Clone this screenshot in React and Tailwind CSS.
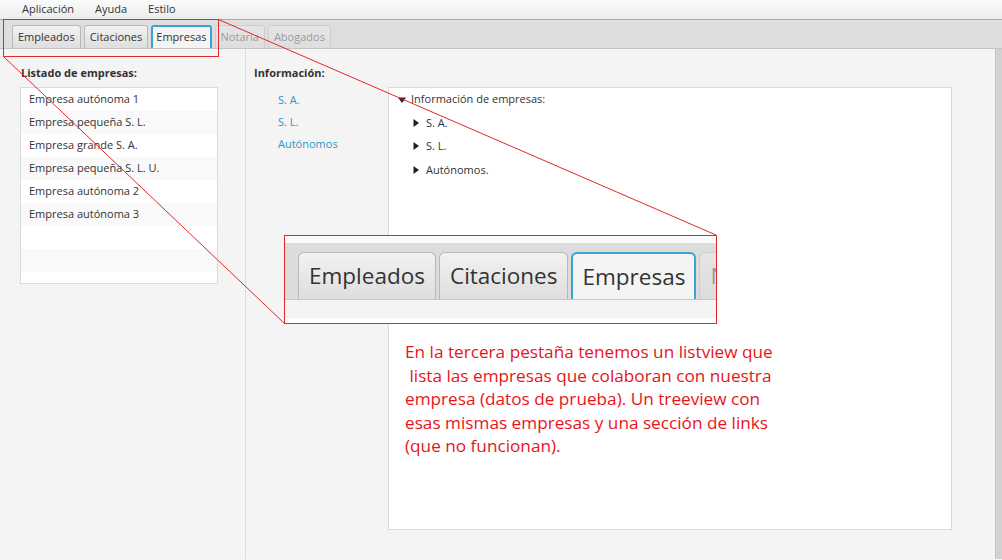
import React from "react";

const empresas = [
    "Empresa autónoma 1",
    "Empresa pequeña S. L.",
    "Empresa grande S. A.",
    "Empresa pequeña S. L. U.",
    "Empresa autónoma 2",
    "Empresa autónoma 3",
    "",
    "",
    "",
];

const tabs = [
    { label: "Empleados" },
    { label: "Citaciones" },
    { label: "Empresas", selected: true },
    { label: "Notaria", disabled: true },
    { label: "Abogados", disabled: true },
];

const Tab = ({ label, selected, disabled, big }) => {
    if (selected) {
        const sel = big
            ? "h-[47px] px-[9px] text-[22.5px] rounded-t-[6px]"
            : "h-[23px] px-[3px] text-[11px] rounded-t-[3px]";
        return (
            <div
                className={`${sel} shrink-0 flex items-center bg-[#f4f4f4] text-[#333] border-t-2 border-x-2 border-[#3fa3d2]`}
            >
                {label}
            </div>
        );
    }
    const base = big
        ? "h-[47px] px-[10px] text-[22.5px] rounded-t-[6px]"
        : "h-[23px] px-[5px] text-[11px] rounded-t-[3px]";
    return (
        <div
            className={`${base} shrink-0 flex items-center bg-gradient-to-b from-[#f2f2f2] to-[#dedede] text-[#333] border-t border-x border-[#b8b8b8] ${disabled ? "opacity-40" : ""}`}
        >
            {label}
        </div>
    );
};

const Arrow = ({ down }) => (
    <svg width="8" height="8" viewBox="0 0 8 8" className="shrink-0">
        {down ? <path d="M0 1.5 L8 1.5 L4 7 Z" fill="#222" /> : <path d="M1.5 0 L7 4 L1.5 8 Z" fill="#222" />}
    </svg>
);

export default function App() {
    return (
        <div className="relative w-[1002px] h-[560px] overflow-hidden bg-[#f4f4f4] text-[#333] font-['Open_Sans','Noto_Sans',sans-serif] text-[11px]">
            {/* menu */}
            <div className="h-[20px] flex items-center gap-[21px] pl-[22px] bg-gradient-to-b from-[#fbfbfb] to-[#ececec] border-b border-[#a9a9a9]">
                <span>Aplicación</span>
                <span>Ayuda</span>
                <span>Estilo</span>
            </div>

            {/* tab header */}
            <div className="h-[29px] flex items-end gap-[3px] pl-[12px] bg-[#dedede] border-b border-[#c4c4c4]">
                {tabs.map((t) => (
                    <Tab key={t.label} {...t} />
                ))}
            </div>

            {/* content */}
            <div className="flex h-[510px]">
                <div className="w-[246px] shrink-0 border-r border-[#dcdcdc] pl-[20px] pt-[16px]">
                    <div className="font-bold pl-[1px] leading-[16px]">Listado de empresas:</div>
                    <div className="mt-[6px] w-[198px] h-[197px] overflow-hidden bg-white border border-[#dadada]">
                        {empresas.map((e, i) => (
                            <div
                                key={i}
                                className={`h-[23px] flex items-center pl-[8px] ${i % 2 ? "bg-[#f9f9f9]" : "bg-white"}`}
                            >
                                {e}
                            </div>
                        ))}
                    </div>
                </div>

                <div className="flex-1 pl-[8px] pt-[16px]">
                    <div className="font-bold leading-[16px]">Información:</div>
                    <div className="flex mt-[6px]">
                        <div className="w-[134px] shrink-0 pl-[24px] pt-[2px] flex flex-col text-[#2a98c6]">
                            <span className="h-[22px] leading-[22px]">S. A.</span>
                            <span className="h-[22px] leading-[22px]">S. L.</span>
                            <span className="h-[22px] leading-[22px]">Autónomos</span>
                        </div>
                        <div className="w-[564px] h-[443px] bg-white border border-[#dadada]">
                            <div className="h-[23px] flex items-center gap-[5px] pl-[9px]">
                                <Arrow down />
                                <span>Información de empresas:</span>
                            </div>
                            {["S. A.", "S. L.", "Autónomos."].map((n) => (
                                <div key={n} className="h-[23.5px] flex items-center gap-[6px] pl-[23px]">
                                    <Arrow />
                                    <span>{n}</span>
                                </div>
                            ))}
                        </div>
                    </div>
                </div>

                <div className="w-[7px] shrink-0 bg-[#d2d2d2] border-l border-[#c6c6c6]" />
            </div>

            {/* zoomed inset */}
            <div className="absolute left-[284px] top-[235px] w-[433px] h-[89px] overflow-hidden border border-[#e0282a] bg-white">
                <div className="h-[7px] bg-[#fafafa]" />
                <div className="h-[57px] flex items-end gap-[3px] pl-[13px] bg-[#dcdcdc] border-b border-[#c8c8c8]">
                    {tabs.map((t) => (
                        <Tab key={t.label} {...t} big />
                    ))}
                </div>
                <div className="h-[18px] bg-[#f4f4f4]" />
            </div>

            {/* annotation text */}
            <div className="absolute left-[405px] top-[340px] text-[#e8141a] text-[17.2px] leading-[23.5px] font-['Open_Sans',sans-serif] whitespace-pre">
                {"En la tercera pestaña tenemos un listview que\n lista las empresas que colaboran con nuestra\nempresa (datos de prueba). Un treeview con\nesas mismas empresas y una sección de links\n(que no funcionan)."}
            </div>

            {/* annotation lines */}
            <svg className="absolute inset-0 pointer-events-none" width="1002" height="560">
                <rect x="3.5" y="19.5" width="215" height="37" fill="none" stroke="#e0282a" strokeWidth="1" />
                <line x1="3.5" y1="56.5" x2="284" y2="323" stroke="#e0282a" strokeWidth="1" />
                <line x1="218.5" y1="19.5" x2="716" y2="235" stroke="#e0282a" strokeWidth="1" />
            </svg>
        </div>
    );
}
